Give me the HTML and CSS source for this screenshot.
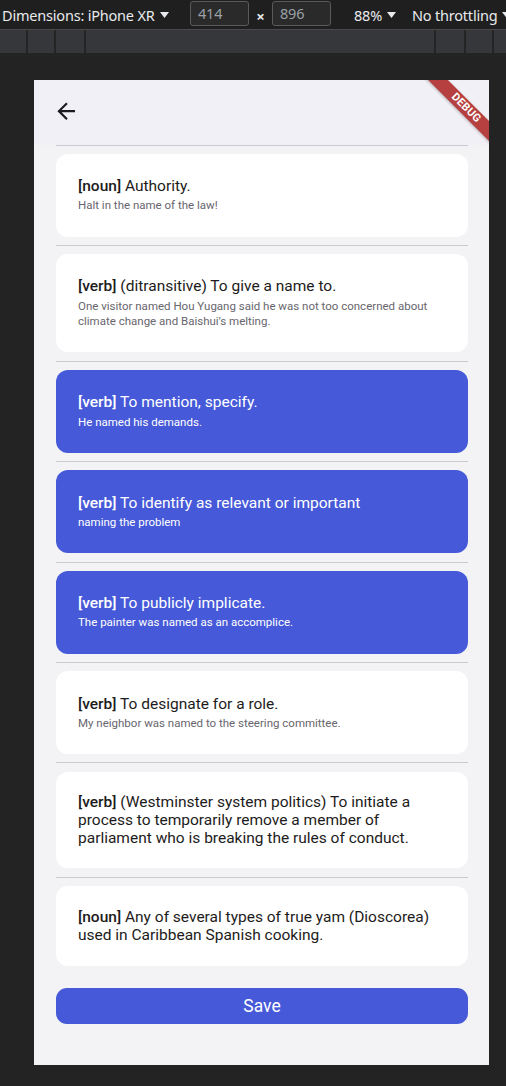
FILE: index.html
```html
<!DOCTYPE html>
<html lang="en">
<head>
<meta charset="utf-8">
<title>Definitions</title>
<link rel="stylesheet" href="styles.css">
</head>
<body>
<div class="devtools">
  <div class="toolbar">
    <div class="dim">Dimensions: iPhone XR<svg class="caret" width="9" height="6" viewBox="0 0 9 6"><path d="M0 0H9L4.5 6Z" fill="#e8eaed"/></svg></div>
    <div class="numbox">414</div>
    <div class="times">×</div>
    <div class="numbox">896</div>
    <div class="zoom">88%<svg class="caret" width="9" height="6" viewBox="0 0 9 6"><path d="M0 0H9L4.5 6Z" fill="#e8eaed"/></svg></div>
    <div class="throttle">No throttling<svg class="caret" width="9" height="6" viewBox="0 0 9 6"><path d="M0 0H9L4.5 6Z" fill="#e8eaed"/></svg></div>
  </div>
  <div class="rulerbar">
    <div class="cell w28"></div>
    <div class="cell w28"></div>
    <div class="cell w30"></div>
    <div class="cell grow"></div>
    <div class="cell w30"></div>
    <div class="cell w28"></div>
    <div class="cell last"></div>
  </div>
</div>
<div class="stage">
  <div class="screen">
    <div class="appbar">
      <svg class="back" width="26.4" height="26.4" viewBox="0 0 24 24"><path d="M20 11H7.83l5.59-5.59L12 4l-8 8 8 8 1.41-1.41L7.83 13H20v-2z" fill="#1d1b20"/></svg>
    </div>
    <div class="list">
      <div class="divider"></div>
      <div class="card has-sub">
        <div class="title"><b>[noun]</b> Authority.</div>
        <div class="sub">Halt in the name of the law!</div>
      </div>
      <div class="divider"></div>
      <div class="card has-sub">
        <div class="title"><b>[verb]</b> (ditransitive) To give a name to.</div>
        <div class="sub">One visitor named Hou Yugang said he was not too concerned about<br>climate change and Baishui’s melting.</div>
      </div>
      <div class="divider"></div>
      <div class="card has-sub selected">
        <div class="title"><b>[verb]</b> To mention, specify.</div>
        <div class="sub">He named his demands.</div>
      </div>
      <div class="divider"></div>
      <div class="card has-sub selected">
        <div class="title"><b>[verb]</b> To identify as relevant or important</div>
        <div class="sub">naming the problem</div>
      </div>
      <div class="divider"></div>
      <div class="card has-sub selected">
        <div class="title"><b>[verb]</b> To publicly implicate.</div>
        <div class="sub">The painter was named as an accomplice.</div>
      </div>
      <div class="divider"></div>
      <div class="card has-sub">
        <div class="title"><b>[verb]</b> To designate for a role.</div>
        <div class="sub">My neighbor was named to the steering committee.</div>
      </div>
      <div class="divider"></div>
      <div class="card">
        <div class="title"><b>[verb]</b> (Westminster system politics) To initiate a<br>process to temporarily remove a member of<br>parliament who is breaking the rules of conduct.</div>
      </div>
      <div class="divider"></div>
      <div class="card two-line">
        <div class="title"><b>[noun]</b> Any of several types of true yam (Dioscorea)<br>used in Caribbean Spanish cooking.</div>
      </div>
      <button class="save">Save</button>
    </div>
    <div class="banner">DEBUG</div>
  </div>
</div>
</body>
</html>
```

FILE: styles.css
```css
* { box-sizing: border-box; }
html, body { margin: 0; padding: 0; }
body {
  background: #232323;
  width: 506px;
  height: 1086px;
  overflow: hidden;
  font-family: Roboto, "Noto Sans", sans-serif;
}

/* DevTools chrome */
.devtools { display: flex; flex-direction: column; }
.toolbar {
  height: 30px;
  background: #1f1f1f;
  border-bottom: 1px solid #4a4a4a;
  display: flex;
  align-items: center;
  font-family: "Noto Sans", "Open Sans", sans-serif;
  font-size: 14.5px;
  letter-spacing: -0.2px;
  color: #e8eaed;
  white-space: nowrap;
  padding-left: 2px;
  overflow: hidden;
}
.toolbar > div { flex: none; }
.dim { width: 188px; display: flex; align-items: center; }
.caret { margin-left: 5px; margin-top: 1px; flex: none; }
.numbox {
  width: 59px;
  height: 25px;
  margin-top: -3px;
  border: 1px solid #5a5a5a;
  border-radius: 3px;
  background: #2a2a2a;
  color: #9aa0a6;
  padding-left: 7px;
  line-height: 23px;
}
.times { width: 23px; text-align: center; font-weight: 700; font-size: 15px; padding-top: 3px; }
.zoom { margin-left: 23px; width: 58px; display: flex; align-items: center; }
.throttle { display: flex; align-items: center; }
.rulerbar {
  height: 23px;
  background: #36373a;
  display: flex;
}
.cell { height: 100%; border-right: 2px solid #242424; flex: none; }
.w28 { width: 28px; }
.w30 { width: 30px; }
.grow { flex: 1; }
.last { width: 12px; border-right: none; }

/* Stage & device screen */
.stage { padding: 27px 0 0 34px; }
.screen {
  position: relative;
  width: 455px;
  height: 985px;
  background: #f3f3f6;
  overflow: hidden;
}
.appbar {
  height: 64.5px;
  background: #f2f0f7;
  padding: 17.8px 0 0 18.6px;
}
.back { display: block; }

.list {
  display: flex;
  flex-direction: column;
  gap: 8.3px;
  padding: 0 21px 0 22px;
}
.divider { height: 1px; background: #cbcad1; }
.card {
  background: #ffffff;
  border-radius: 12px;
  padding: 21px 22px 21px 22px;
  color: #1d1b20;
}
.card.two-line { padding-top: 22px; padding-bottom: 21.5px; }
.card.has-sub { padding-top: 23.3px; padding-bottom: 22.8px; }
.title {
  font-size: 15.5px;
  line-height: 18.2px;
}
.title b { font-weight: 500; }
.sub {
  margin-top: 3px;
  font-size: 11.5px;
  line-height: 15.5px;
  color: #68666d;
}
.card.selected { background: #4659d8; color: #ffffff; }
.card.selected .sub { color: #ffffff; }

.save {
  margin-top: 13.5px;
  height: 36.7px;
  border: none;
  border-radius: 11px;
  background: #4659d8;
  color: #ffffff;
  font-family: Roboto, sans-serif;
  font-size: 17.5px;
  font-weight: 400;
  padding: 0;
}

.banner {
  position: absolute;
  left: 372px;
  top: 21px;
  width: 120px;
  height: 14px;
  transform: rotate(45deg);
  background: #b5403f;
  color: #ffffff;
  font-family: Roboto, sans-serif;
  font-weight: 700;
  font-size: 11px;
  line-height: 14px;
  text-align: center;
  letter-spacing: 0.2px;
  box-shadow: 0 1px 3px rgba(0,0,0,0.25);
}
```
